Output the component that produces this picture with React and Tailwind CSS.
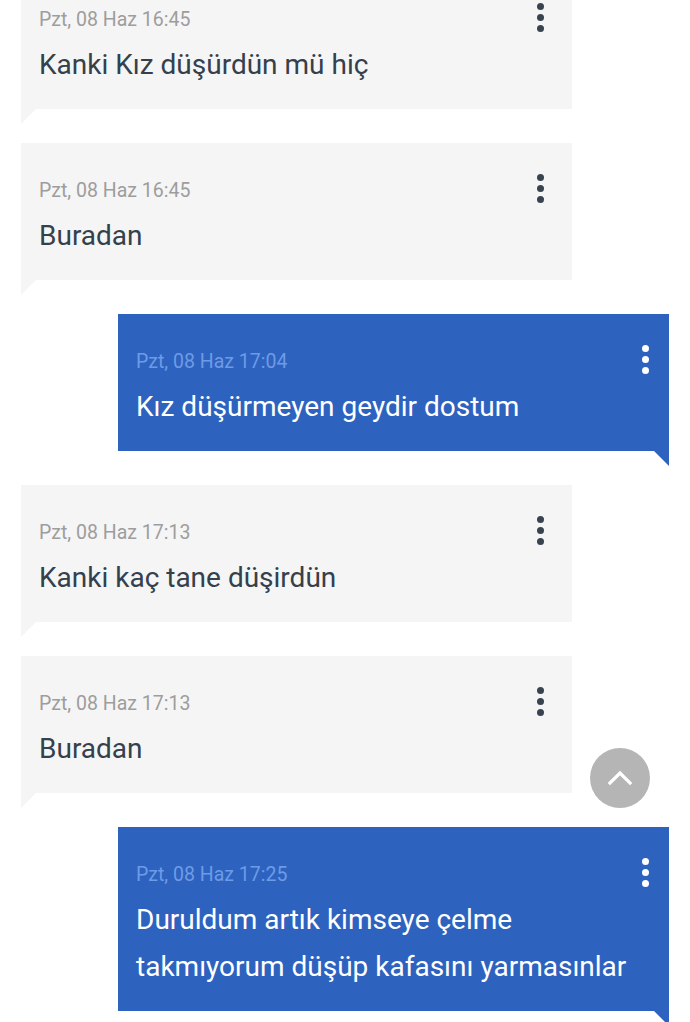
import { useState } from 'react';

const messages = [
  { id: 1, mine: false, time: 'Pzt, 08 Haz 16:45', text: 'Kanki Kız düşürdün mü hiç' },
  { id: 2, mine: false, time: 'Pzt, 08 Haz 16:45', text: 'Buradan' },
  { id: 3, mine: true, time: 'Pzt, 08 Haz 17:04', text: 'Kız düşürmeyen geydir dostum' },
  { id: 4, mine: false, time: 'Pzt, 08 Haz 17:13', text: 'Kanki kaç tane düşirdün' },
  { id: 5, mine: false, time: 'Pzt, 08 Haz 17:13', text: 'Buradan' },
  { id: 6, mine: true, time: 'Pzt, 08 Haz 17:25', text: 'Duruldum artık kimseye çelme takmıyorum düşüp kafasını yarmasınlar' },
];

function Dots({ mine }) {
  const dot = mine ? 'bg-white' : 'bg-[#37434f]';
  return (
    <button className="flex flex-col items-center gap-[4px] px-1 pt-[2px]">
      <span className={`w-[7px] h-[7px] rounded-full ${dot}`} />
      <span className={`w-[7px] h-[7px] rounded-full ${dot}`} />
      <span className={`w-[7px] h-[7px] rounded-full ${dot}`} />
    </button>
  );
}

function Bubble({ msg }) {
  if (msg.mine) {
    return (
      <div className="flex flex-col items-end pl-[118px] pr-[21px]">
        <div className="w-full bg-[#2e62bf] pl-[18px] pr-[16px] pt-[29px] pb-[21px] flex gap-2">
          <div className="flex-1 pt-[7px]">
            <p className="text-[19.5px] leading-[24px] text-[#6d9be6]">{msg.time}</p>
            <p className="mt-[9px] text-[28px] leading-[47px] text-white">{msg.text}</p>
          </div>
          <Dots mine />
        </div>
        <div className="w-[15px] h-[15px] bg-[#2e62bf] [clip-path:polygon(0_0,100%_0,100%_100%)]" />
      </div>
    );
  }
  return (
    <div className="flex flex-col items-start pl-[21px] pr-[118px]">
      <div className="w-full bg-[#f5f5f5] pl-[18px] pr-[24px] pt-[29px] pb-[21px] flex gap-2">
        <div className="flex-1 pt-[7px]">
          <p className="text-[19.5px] leading-[24px] text-[#9d9d9d]">{msg.time}</p>
          <p className="mt-[9px] text-[28px] leading-[47px] text-[#34404c]">{msg.text}</p>
        </div>
        <Dots />
      </div>
      <div className="w-[15px] h-[15px] bg-[#f5f5f5] [clip-path:polygon(0_0,100%_0,0_100%)]" />
    </div>
  );
}

export default function App() {
  const [list] = useState(messages);
  return (
    <div className="relative h-[1022px] overflow-hidden bg-white font-['Roboto','Liberation_Sans',sans-serif]">
      <div className="-mt-[28px] flex flex-col gap-[19px]">
        {list.map((m) => (
          <Bubble key={m.id} msg={m} />
        ))}
      </div>

      {/* scroll to top */}
      <button className="absolute left-[590px] top-[748px] w-[60px] h-[60px] rounded-full bg-[#b5b5b5] flex items-center justify-center">
        <svg width="30" height="30" viewBox="0 0 24 24" fill="none" stroke="white" strokeWidth="2.6" strokeLinecap="square">
          <path d="M4 16 L12 8 L20 16" />
        </svg>
      </button>
    </div>
  );
}
